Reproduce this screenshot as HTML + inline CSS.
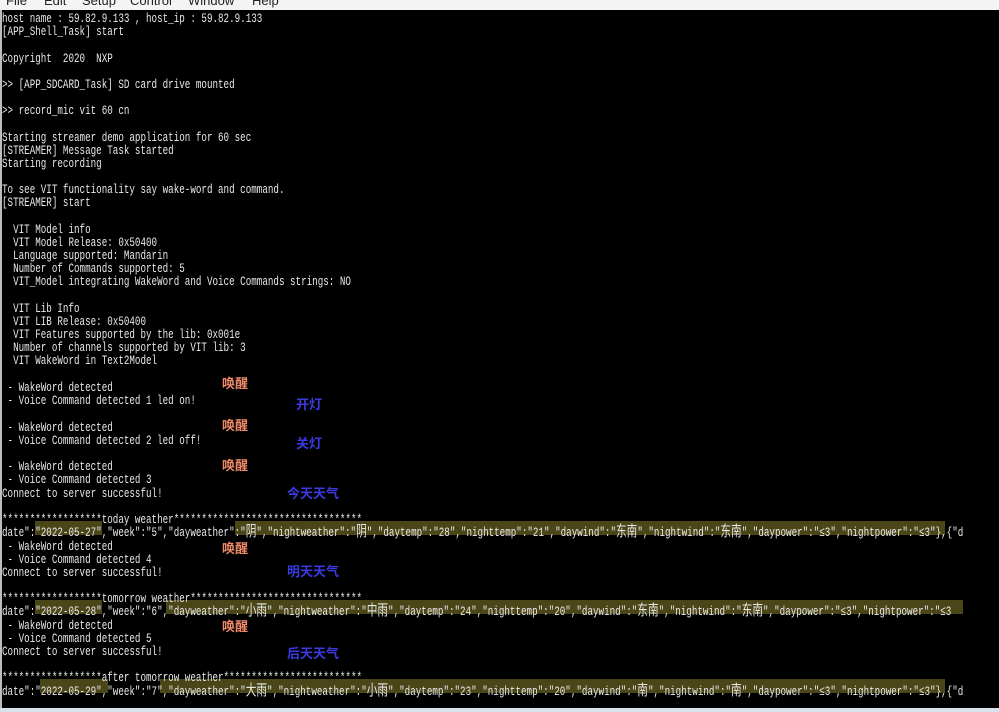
<!DOCTYPE html>
<html><head><meta charset="utf-8"><style>
body{margin:0;width:999px;height:712px;overflow:hidden;background:#fff;position:relative;font-family:"Liberation Sans",sans-serif}
#menu{position:absolute;left:0;top:-9px;height:19px;width:999px;background:#f4f4f4;font-size:13px;color:#222}
#menu span{position:absolute;top:2px}
#term{position:absolute;left:2px;top:10px;width:997px;height:698px;background:#000}
#bot{position:absolute;left:0;top:708px;width:999px;height:4px;background:#d8e2ea}
#lb{position:absolute;left:0;top:10px;width:2px;height:698px;background:#bcbcbc}
#w{position:absolute;left:0;top:1px;width:999px;height:700px}
.l{position:absolute;left:2px;white-space:pre;color:#e8e8e8;font-family:"Liberation Mono","Noto Sans CJK SC",monospace;font-size:13px;line-height:14px;transform:scaleX(0.71);transform-origin:0 0}
.c{font-size:15px;letter-spacing:0}
.h{position:absolute;background:#4a4618;height:14px}
.a{position:absolute;font-family:"Liberation Sans","Noto Sans CJK SC",sans-serif;font-weight:bold;font-size:13px;line-height:15px}
.o{color:#f08a6a}.b{color:#3a3ae0}
</style></head><body>
<div id="menu"><span style="left:6px">File</span><span style="left:44px">Edit</span><span style="left:82px">Setup</span><span style="left:130px">Control</span><span style="left:188px">Window</span><span style="left:252px">Help</span></div>
<div id="term"></div><div id="lb"></div><div id="bot"></div>
<div class="h" style="left:35px;top:521px;width:67px"></div>
<div class="h" style="left:235px;top:521px;width:710px"></div>
<div class="h" style="left:35px;top:600px;width:67px"></div>
<div class="h" style="left:166px;top:600px;width:797px"></div>
<div class="h" style="left:40px;top:679px;width:68px"></div>
<div class="h" style="left:160px;top:679px;width:785px"></div>
<div id="w">
<div class="l" style="top:11px">host name : 59.82.9.133 , host_ip : 59.82.9.133</div>
<div class="l" style="top:24px">[APP_Shell_Task] start</div>
<div class="l" style="top:51px">Copyright  2020  NXP</div>
<div class="l" style="top:77px">&gt;&gt; [APP_SDCARD_Task] SD card drive mounted</div>
<div class="l" style="top:103px">&gt;&gt; record_mic vit 60 cn</div>
<div class="l" style="top:130px">Starting streamer demo application for 60 sec</div>
<div class="l" style="top:143px">[STREAMER] Message Task started</div>
<div class="l" style="top:156px">Starting recording</div>
<div class="l" style="top:182px">To see VIT functionality say wake-word and command.</div>
<div class="l" style="top:195px">[STREAMER] start</div>
<div class="l" style="top:222px">  VIT Model info</div>
<div class="l" style="top:235px">  VIT Model Release: 0x50400</div>
<div class="l" style="top:248px">  Language supported: Mandarin</div>
<div class="l" style="top:261px">  Number of Commands supported: 5</div>
<div class="l" style="top:274px">  VIT_Model integrating WakeWord and Voice Commands strings: NO</div>
<div class="l" style="top:301px">  VIT Lib Info</div>
<div class="l" style="top:314px">  VIT LIB Release: 0x50400</div>
<div class="l" style="top:327px">  VIT Features supported by the lib: 0x001e</div>
<div class="l" style="top:340px">  Number of channels supported by VIT lib: 3</div>
<div class="l" style="top:353px">  VIT WakeWord in Text2Model</div>
<div class="l" style="top:380px"> - WakeWord detected</div>
<div class="l" style="top:393px"> - Voice Command detected 1 led on!</div>
<div class="l" style="top:420px"> - WakeWord detected</div>
<div class="l" style="top:433px"> - Voice Command detected 2 led off!</div>
<div class="l" style="top:459px"> - WakeWord detected</div>
<div class="l" style="top:472px"> - Voice Command detected 3</div>
<div class="l" style="top:486px">Connect to server successful!</div>
<div class="l" style="top:512px">******************today weather**********************************</div>
<div class="l" style="top:525px">date":"2022-05-27","week":"5","dayweather":"<span class="c">阴</span>","nightweather":"<span class="c">阴</span>","daytemp":"28","nighttemp":"21","daywind":"<span class="c">东南</span>","nightwind":"<span class="c">东南</span>","daypower":"≤3","nightpower":"≤3"},{"d</div>
<div class="l" style="top:539px"> - WakeWord detected</div>
<div class="l" style="top:552px"> - Voice Command detected 4</div>
<div class="l" style="top:565px">Connect to server successful!</div>
<div class="l" style="top:591px">******************tomorrow weather*******************************</div>
<div class="l" style="top:604px">date":"2022-05-28","week":"6","dayweather":"<span class="c">小雨</span>","nightweather":"<span class="c">中雨</span>","daytemp":"24","nighttemp":"20","daywind":"<span class="c">东南</span>","nightwind":"<span class="c">东南</span>","daypower":"≤3","nightpower":"≤3</div>
<div class="l" style="top:618px"> - WakeWord detected</div>
<div class="l" style="top:631px"> - Voice Command detected 5</div>
<div class="l" style="top:644px">Connect to server successful!</div>
<div class="l" style="top:670px">******************after tomorrow weather*************************</div>
<div class="l" style="top:684px">date":"2022-05-29","week":"7","dayweather":"<span class="c">大雨</span>","nightweather":"<span class="c">小雨</span>","daytemp":"23","nighttemp":"20","daywind":"<span class="c">南</span>","nightwind":"<span class="c">南</span>","daypower":"≤3","nightpower":"≤3"},{"d</div>
</div>
<div class="a o" style="left:222px;top:376px">唤醒</div>
<div class="a b" style="left:296px;top:397px">开灯</div>
<div class="a o" style="left:222px;top:418px">唤醒</div>
<div class="a b" style="left:296px;top:436px">关灯</div>
<div class="a o" style="left:222px;top:458px">唤醒</div>
<div class="a b" style="left:287px;top:486px">今天天气</div>
<div class="a o" style="left:222px;top:541px">唤醒</div>
<div class="a b" style="left:287px;top:564px">明天天气</div>
<div class="a o" style="left:222px;top:619px">唤醒</div>
<div class="a b" style="left:287px;top:646px">后天天气</div>
</body></html>
